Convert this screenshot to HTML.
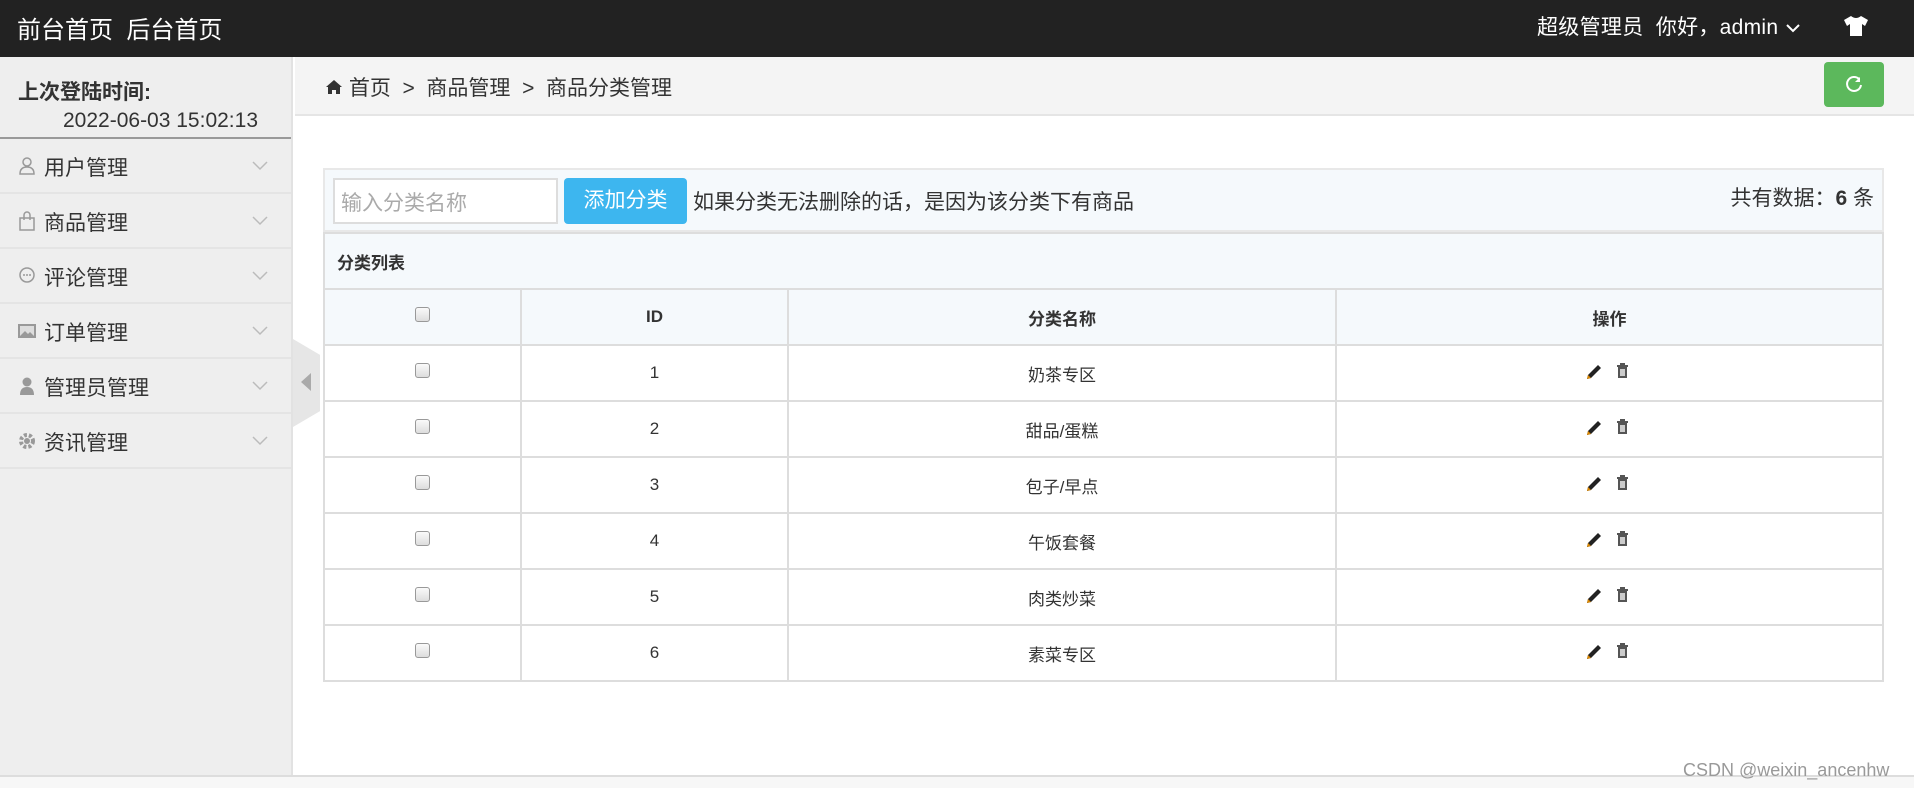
<!DOCTYPE html>
<html><head><meta charset="utf-8"><style>
*{box-sizing:border-box;margin:0;padding:0}
body{width:1914px;height:788px;overflow:hidden;font-family:"Liberation Sans","Noto Sans CJK SC",sans-serif;background:#fff;color:#333;position:relative}
.hd{position:absolute;left:0;top:0;width:1914px;height:57px;background:#222;color:#fff}
.hd .t{position:absolute;left:17px;top:10px;font-size:24px}
.hd .r{position:absolute;left:1537px;top:11px;font-size:21px;letter-spacing:0.3px}
.side{position:absolute;left:0;top:57px;width:293px;height:718px;background:#eee;border-right:2px solid #e2e2e2}
.login{height:82px;border-bottom:2px solid #999}
.login b{position:absolute;left:18px;top:19px;font-size:21px}
.login span{position:absolute;left:63px;top:52px;font-size:21px}
.mi{height:55px;border-bottom:2px solid #e4e4e4;position:relative;font-size:21px;color:#333}
.mi .ic{position:absolute;left:17px;top:17px;width:20px;height:20px}
.mi .tx{position:absolute;left:44px;top:13px}
.mi .ch{position:absolute;left:252px;top:20px}
.tab{position:absolute;left:293px;top:339px;width:27px;height:88px;background:#e6e6e6;clip-path:polygon(0 0,100% 18%,100% 82%,0 100%)}
.bc{position:absolute;left:295px;top:57px;width:1619px;height:59px;background:#f4f4f4;border-bottom:2px solid #e5e5e5;font-size:21px}
.bc .tx{position:absolute;left:30px;top:15px}
.gb{position:absolute;left:1824px;top:62px;width:60px;height:45px;background:#5cb85c;border-radius:4px}
.tb{position:absolute;left:323px;top:168px;width:1561px;height:64px;background:#f5f9fc;border:2px solid #e8e8e8}
.inp{position:absolute;left:8px;top:8px;width:225px;height:46px;background:#fff;border:2px solid #ddd;color:#aaa;font-size:21px;padding:7px 6px}
.btn{position:absolute;left:239px;top:8px;width:123px;height:46px;background:#3db6ef;border-radius:4px;color:#fff;font-size:21px;text-align:center;line-height:46px}
.note{position:absolute;left:368px;top:16px;font-size:21px}
.cnt{position:absolute;right:8px;top:12px;font-size:21px}
table{position:absolute;left:323px;top:232px;width:1561px;border-collapse:collapse;font-size:17px}
td,th{border:2px solid #ddd;text-align:center;height:56px}
th{background:#f5f9fc;font-weight:bold}
.cap{text-align:left;padding-left:12px;font-weight:bold;background:#f5f9fc;font-size:17px;border-bottom:2px solid #ddd}
.cb{display:inline-block;width:15px;height:15px;border:1px solid #999;border-radius:3px;background:linear-gradient(#fafafa,#ddd);vertical-align:middle;margin-top:-6px}
.st{position:absolute;left:0;top:775px;width:1914px;height:13px;background:#f7f7f7;border-top:2px solid #ddd;font-size:14px;color:#555}
.wm{position:absolute;left:1683px;top:760px;font-size:18px;color:#999}
</style></head><body>
<div class="hd"><div class="t">前台首页&nbsp; 后台首页</div>
<div class="r">超级管理员&nbsp; 你好，admin <svg width="16" height="12" viewBox="0 0 16 12"><path d="M2 3l6 6 6-6" stroke="#fff" stroke-width="2" fill="none"/></svg></div>
<svg style="position:absolute;left:1843px;top:15px" width="26" height="22" viewBox="0 0 26 22"><path d="M8 1 L1 5 L4 11 L7 9 V21 H19 V9 L22 11 L25 5 L18 1 Q13 5 8 1Z" fill="#fff"/></svg>
</div>
<div class="side">
<div class="login"><b>上次登陆时间:</b><span>2022-06-03 15:02:13</span></div>
<div class="mi"><svg class="ic" viewBox="0 0 20 20"><circle cx="10" cy="6" r="4" fill="none" stroke="#999" stroke-width="1.5"/><path d="M3 18 Q3 11 10 11 Q17 11 17 18Z" fill="none" stroke="#999" stroke-width="1.5"/></svg><span class="tx">用户管理</span><svg class="ch" width="16" height="12"><path d="M1 3l7 7 7-7" stroke="#bbb" stroke-width="1.5" fill="none"/></svg></div>
<div class="mi"><svg class="ic" viewBox="0 0 20 20"><rect x="3" y="7" width="14" height="12" fill="none" stroke="#999" stroke-width="1.5"/><path d="M7 9V4a3 3 0 016 0v5" fill="none" stroke="#999" stroke-width="1.5"/></svg><span class="tx">商品管理</span><svg class="ch" width="16" height="12"><path d="M1 3l7 7 7-7" stroke="#bbb" stroke-width="1.5" fill="none"/></svg></div>
<div class="mi"><svg class="ic" viewBox="0 0 20 20"><circle cx="10" cy="9" r="7" fill="none" stroke="#999" stroke-width="1.5"/><circle cx="7" cy="9" r="1" fill="#999"/><circle cx="10" cy="9" r="1" fill="#999"/><circle cx="13" cy="9" r="1" fill="#999"/></svg><span class="tx">评论管理</span><svg class="ch" width="16" height="12"><path d="M1 3l7 7 7-7" stroke="#bbb" stroke-width="1.5" fill="none"/></svg></div>
<div class="mi"><svg class="ic" viewBox="0 0 20 20"><rect x="1" y="3" width="18" height="14" fill="#999"/><rect x="3" y="5" width="14" height="10" fill="#ddd"/><path d="M3 15l5-5 3 3 2-2 4 4Z" fill="#999"/></svg><span class="tx">订单管理</span><svg class="ch" width="16" height="12"><path d="M1 3l7 7 7-7" stroke="#bbb" stroke-width="1.5" fill="none"/></svg></div>
<div class="mi"><svg class="ic" viewBox="0 0 20 20"><circle cx="10" cy="6" r="4.5" fill="#999"/><path d="M3 19 Q3 11 10 11 Q17 11 17 19Z" fill="#999"/></svg><span class="tx">管理员管理</span><svg class="ch" width="16" height="12"><path d="M1 3l7 7 7-7" stroke="#bbb" stroke-width="1.5" fill="none"/></svg></div>
<div class="mi"><svg class="ic" viewBox="0 0 20 20"><circle cx="10" cy="10" r="6" fill="none" stroke="#999" stroke-width="4" stroke-dasharray="3 2"/><circle cx="10" cy="10" r="3" fill="#999"/></svg><span class="tx">资讯管理</span><svg class="ch" width="16" height="12"><path d="M1 3l7 7 7-7" stroke="#bbb" stroke-width="1.5" fill="none"/></svg></div>
</div>
<div class="tab"><svg style="position:absolute;left:8px;top:34px" width="10" height="18"><path d="M10 0L0 9l10 9Z" fill="#aaa"/></svg></div>
<div class="bc"><span class="tx"><svg width="18" height="16" viewBox="0 0 18 16"><path d="M9 1L1 8h2v7h4v-4h4v4h4V8h2Z" fill="#333"/></svg> 首页 &nbsp;&gt;&nbsp; 商品管理 &nbsp;&gt;&nbsp; 商品分类管理</span></div>
<div class="gb"><svg style="position:absolute;left:20px;top:12px" width="20" height="20" viewBox="0 0 20 20"><path d="M15 5A7 7 0 1 0 17 11" fill="none" stroke="#fff" stroke-width="2"/><path d="M16 3v5h-5" fill="#fff"/></svg></div>
<div class="tb"><div class="inp">输入分类名称</div><div class="btn">添加分类</div><div class="note">如果分类无法删除的话，是因为该分类下有商品</div><div class="cnt">共有数据：<b>6</b> 条</div></div>
<table>
<tr><td colspan="4" class="cap">分类列表</td></tr>
<tr><th style="width:197px"><span class="cb"></span></th><th style="width:267px">ID</th><th style="width:548px">分类名称</th><th>操作</th></tr>
<tr><td><span class="cb"></span></td><td>1</td><td>奶茶专区</td><td class="op"></td></tr>
<tr><td><span class="cb"></span></td><td>2</td><td>甜品/蛋糕</td><td class="op"></td></tr>
<tr><td><span class="cb"></span></td><td>3</td><td>包子/早点</td><td class="op"></td></tr>
<tr><td><span class="cb"></span></td><td>4</td><td>午饭套餐</td><td class="op"></td></tr>
<tr><td><span class="cb"></span></td><td>5</td><td>肉类炒菜</td><td class="op"></td></tr>
<tr><td><span class="cb"></span></td><td>6</td><td>素菜专区</td><td class="op"></td></tr>
</table>
<script>
document.querySelectorAll('.op').forEach(function(e){e.innerHTML='<svg width="50" height="18" viewBox="0 0 50 18"><path d="M2 17l1-4 10-10 3 3-10 10Z" fill="#222"/><path d="M2 17l1-4 3 3Z" fill="#d80"/><rect x="33" y="5" width="9" height="11" fill="#555"/><rect x="35" y="7" width="5" height="7" fill="#ccc"/><rect x="32" y="3" width="11" height="2" fill="#555"/><rect x="35" y="1" width="5" height="2" fill="#555"/></svg>';});
</script>
<div class="st"></div>
<div class="wm">CSDN @weixin_ancenhw</div>
</body></html>
